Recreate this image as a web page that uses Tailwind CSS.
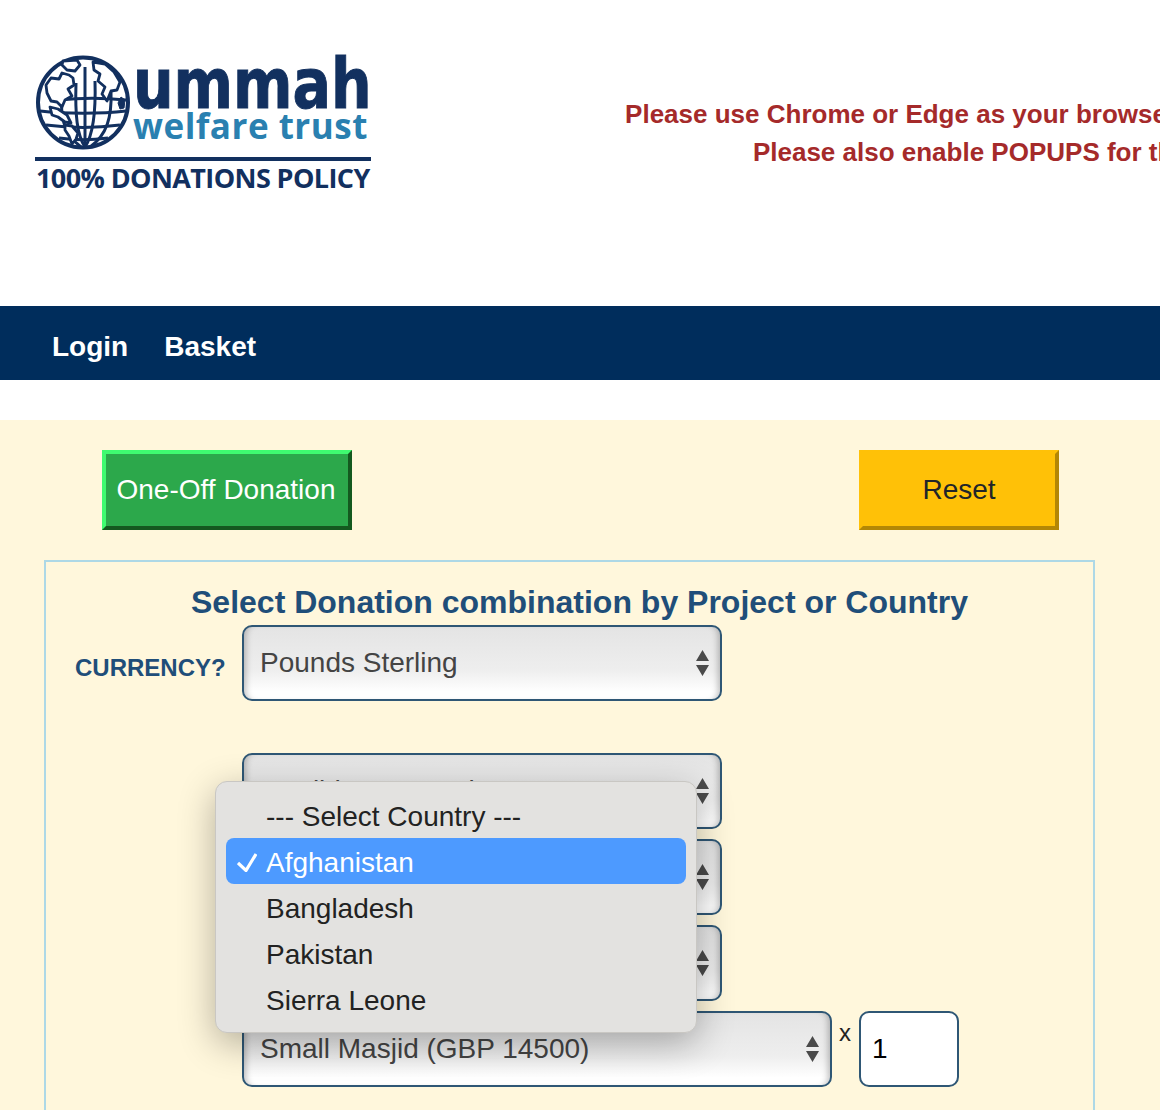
<!DOCTYPE html>
<html lang="en">
<head>
    <meta charset="UTF-8">
    <meta name="viewport" content="width=device-width, initial-scale=1.0">
    <title>Ummah Welfare Trust</title>
    <script src="https://cdn.jsdelivr.net/npm/@tailwindcss/browser@4"></script>
</head>
<body class="font-['Liberation_Sans',Arial,sans-serif]">
<div class="relative w-[1160px] h-[1110px] overflow-hidden bg-white">

    <!-- Header -->
    <header class="flex h-[306px]">
        <div class="w-[372px] shrink-0 pl-[35px] pt-[55px]">
            <div class="flex items-start">
                <svg class="w-[96px] h-[96px] shrink-0" viewBox="0 0 96 96" fill="none" stroke="#12305f" stroke-linejoin="round">
                    <circle cx="48" cy="47.5" r="45" fill="#fff" stroke-width="4"/>
                    <!-- grid -->
                    <g stroke-width="3">
                        <path d="M50 92C42 80 40 60 41 28"/>
                        <path d="M50 92V12"/>
                        <path d="M50 92C58 80 61 60 60 26"/>
                        <path d="M46 92C30 80 25 62 27 46"/>
                        <path d="M55 92C72 80 77 62 76 36"/>
                        <path d="M24 45C44 43 70 43 91 45"/>
                        <path d="M5 56C30 59 66 59 91 56"/>
                        <path d="M11 70C34 73 62 73 85 70"/>
                        <path d="M24 83C38 85 58 85 73 83"/>
                    </g>
                    <!-- land -->
                    <g fill="#fff" stroke-width="2.8">
                        <path d="M11 30l5-7 8 1 3-6 7 2 4 3 1 7-6 4 4 7-7 4-3 7-5-5-6-1-4-8z"/>
                        <path d="M28 6l14-1 3 5-5 6-8-1-5-5z"/>
                        <path d="M58 7l12 2 9 8 6 10-3 8-6 1-4 10-5-7 3-7-7-6 2-7-6-4z"/>
                        <path d="M15 52l8 2 9 6 4 8-6-1-7-5-6-2z"/>
                        <path d="M30 70l7 1 6 7-2 6-4 5-3-8-4-6z"/>
                    </g>
                    <path d="M86 42l4 3-1 8-4 1-2-6z" fill="#12305f" stroke-width="1"/>
                </svg>
                <div class="ml-[2px] w-[240px]">
                    <div class="h-[59px] mt-[1px] font-['DejaVu_Sans',sans-serif] font-bold text-[70px] leading-[56px] origin-left scale-x-[0.815] whitespace-nowrap text-[#12305f] [-webkit-text-stroke:1px_#12305f]">ummah</div>
                    <div class="h-[30px] -mt-[4px] font-['Open_Sans',sans-serif] font-bold text-[35px] leading-[30px] tracking-[0.5px] text-[#2a80b0] whitespace-nowrap">welfare trust</div>
                </div>
            </div>
            <div class="w-[336px] h-[4px] mt-[6px] bg-[#12305f]"></div>
            <div class="w-[336px] mt-[2px] pl-[1px] font-['Open_Sans',sans-serif] font-bold text-[27px] leading-[30px] tracking-[-0.6px] text-[#12305f] whitespace-nowrap">100% DONATIONS POLICY</div>
        </div>
        <div class="w-[800px] shrink-0 ml-[228px] pt-[95px] text-center font-bold text-[26px] leading-[38px] text-[#a52a2a]">
            <p class="whitespace-nowrap">Please use Chrome or Edge as your browser when donating.</p>
            <p class="whitespace-nowrap">Please also enable POPUPS for this site</p>
        </div>
    </header>

    <!-- Nav -->
    <nav class="flex items-center gap-[36px] h-[74px] pt-[7px] pl-[52px] bg-[#002d5c] text-white font-bold text-[28px]">
        <a href="#">Login</a>
        <a href="#">Basket</a>
    </nav>

    <div class="h-[40px]"></div>

    <!-- Donation form -->
    <main class="h-[690px] pt-[30px] bg-[#fff7dc]">
        <div class="flex justify-between pl-[102px] pr-[101px]">
            <button class="w-[250px] h-[80px] pr-[2px] border-4 border-t-[#3ffb70] border-l-[#3ffb70] border-b-[#14591f] border-r-[#14591f] bg-[#2ca84b] text-white text-[28px]">One-Off Donation</button>
            <button class="w-[200px] h-[80px] border-4 border-t-[#ffc107] border-l-[#ffc107] border-b-[#b38705] border-r-[#b38705] bg-[#ffc107] text-[#212529] text-[28px]">Reset</button>
        </div>

        <section class="w-[1051px] h-[640px] ml-[44px] mt-[30px] border-2 border-[#add8e6]">
            <h2 class="mt-[20px] pl-[20px] text-center font-bold text-[32px] leading-[40px] text-[#1f4e79]">Select Donation combination by Project or Country</h2>

            <div class="flex mt-[3px]">
                <label class="w-[196px] pt-[28px] pl-[29px] font-bold text-[24px] leading-[30px] text-[#1f4e79]">CURRENCY?</label>
                <div class="relative w-[480px] h-[76px]">
                    <select class="appearance-none w-full h-full pl-[16px] border-2 border-[#2f5775] rounded-[10px] bg-gradient-to-b from-[#e4e4e4] via-[#eeeeee] via-60% to-white to-90% shadow-[inset_7px_0_6px_-5px_rgba(0,0,0,0.25),inset_-7px_0_6px_-5px_rgba(0,0,0,0.25)] text-[28px] text-[#444]">
                        <option>Pounds Sterling</option>
                    </select>
                    <svg class="absolute right-[13px] top-[25px] w-[13px] h-[26px]" viewBox="0 0 13 26" fill="#4a4a4a"><path d="M6.5 0L13 11H0zM0 15h13L6.500 26z"/></svg>
                </div>
            </div>

            <div class="flex flex-col gap-[10px] mt-[52px] ml-[196px]">
                <div class="relative w-[480px] h-[76px]">
                    <select class="appearance-none w-full h-full pl-[16px] border-2 border-[#2f5775] rounded-[10px] bg-gradient-to-b from-[#e4e4e4] via-[#eeeeee] via-60% to-white to-90% shadow-[inset_7px_0_6px_-5px_rgba(0,0,0,0.25),inset_-7px_0_6px_-5px_rgba(0,0,0,0.25)] text-[28px] text-[#444]">
                        <option>Masjid Construction</option>
                    </select>
                    <svg class="absolute right-[13px] top-[25px] w-[13px] h-[26px]" viewBox="0 0 13 26" fill="#4a4a4a"><path d="M6.5 0L13 11H0zM0 15h13L6.500 26z"/></svg>
                </div>
                <div class="relative w-[480px] h-[76px]">
                    <select class="appearance-none w-full h-full pl-[16px] border-2 border-[#2f5775] rounded-[10px] bg-gradient-to-b from-[#e4e4e4] via-[#eeeeee] via-60% to-white to-90% shadow-[inset_7px_0_6px_-5px_rgba(0,0,0,0.25),inset_-7px_0_6px_-5px_rgba(0,0,0,0.25)] text-[28px] text-[#444]">
                        <option>Afghanistan</option>
                    </select>
                    <svg class="absolute right-[13px] top-[25px] w-[13px] h-[26px]" viewBox="0 0 13 26" fill="#4a4a4a"><path d="M6.5 0L13 11H0zM0 15h13L6.500 26z"/></svg>
                </div>
                <div class="relative w-[480px] h-[76px]">
                    <select class="appearance-none w-full h-full pl-[16px] border-2 border-[#2f5775] rounded-[10px] bg-gradient-to-b from-[#e4e4e4] via-[#eeeeee] via-60% to-white to-90% shadow-[inset_7px_0_6px_-5px_rgba(0,0,0,0.25),inset_-7px_0_6px_-5px_rgba(0,0,0,0.25)] text-[28px] text-[#444]">
                        <option>Masjid</option>
                    </select>
                    <svg class="absolute right-[13px] top-[25px] w-[13px] h-[26px]" viewBox="0 0 13 26" fill="#4a4a4a"><path d="M6.5 0L13 11H0zM0 15h13L6.500 26z"/></svg>
                </div>
                <div class="flex items-start">
                    <div class="relative w-[590px] h-[76px]">
                        <select class="appearance-none w-full h-full pl-[16px] border-2 border-[#2f5775] rounded-[10px] bg-gradient-to-b from-[#e4e4e4] via-[#eeeeee] via-60% to-white to-90% shadow-[inset_7px_0_6px_-5px_rgba(0,0,0,0.25),inset_-7px_0_6px_-5px_rgba(0,0,0,0.25)] text-[28px] text-[#444]">
                            <option>Small Masjid (GBP 14500)</option>
                        </select>
                        <svg class="absolute right-[13px] top-[25px] w-[13px] h-[26px]" viewBox="0 0 13 26" fill="#4a4a4a"><path d="M6.5 0L13 11H0zM0 15h13L6.500 26z"/></svg>
                    </div>
                    <span class="w-[27px] pt-[7px] pl-[7px] text-[24px] leading-[30px] text-[#222]">x</span>
                    <input class="w-[100px] h-[76px] pl-[11px] border-2 border-[#2f5775] rounded-[10px] bg-white text-[28px] text-black" value="1">
                </div>
            </div>
        </section>
    </main>

    <!-- Open country dropdown -->
    <ul class="absolute left-[215px] top-[781px] w-[482px] h-[252px] px-[10px] pt-[10px] rounded-[12px] border border-[#c9c7c3] bg-[#e3e2e0] shadow-[0_10px_36px_rgba(0,0,0,0.3)] text-[28px] leading-[50px] text-[#222]">
        <li class="h-[46px] pl-[40px]">--- Select Country ---</li>
        <li class="relative h-[46px] pl-[40px] rounded-[8px] bg-[#4d9aff] text-white">
            <svg class="absolute left-[11px] top-[15px] w-[20px] h-[19px]" viewBox="0 0 20 19" fill="none" stroke="#fff" stroke-width="3.2"><path d="M1 10l8 7.500L19 1"/></svg>
            Afghanistan
        </li>
        <li class="h-[46px] pl-[40px]">Bangladesh</li>
        <li class="h-[46px] pl-[40px]">Pakistan</li>
        <li class="h-[46px] pl-[40px]">Sierra Leone</li>
    </ul>
</div>
</body>
</html>
